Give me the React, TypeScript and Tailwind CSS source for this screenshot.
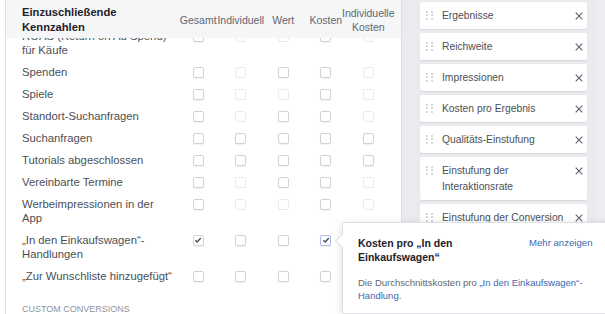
import React from "react";

type Box = "n" | "f" | "c" | "cb";

const rows: { label: string; boxes: Box[] }[] = [
  { label: "ROAS (Return on Ad Spend) für Käufe", boxes: ["n", "f", "f", "n", "f"] },
  { label: "Spenden", boxes: ["n", "f", "n", "n", "f"] },
  { label: "Spiele", boxes: ["n", "f", "f", "n", "f"] },
  { label: "Standort-Suchanfragen", boxes: ["n", "f", "n", "n", "f"] },
  { label: "Suchanfragen", boxes: ["n", "n", "n", "n", "n"] },
  { label: "Tutorials abgeschlossen", boxes: ["n", "n", "n", "n", "n"] },
  { label: "Vereinbarte Termine", boxes: ["n", "f", "n", "n", "f"] },
  { label: "Werbeimpressionen in der App", boxes: ["n", "f", "f", "n", "f"] },
  { label: "„In den Einkaufswagen“-Handlungen", boxes: ["c", "n", "n", "cb", "n"] },
  { label: "„Zur Wunschliste hinzugefügt“", boxes: ["n", "n", "n", "n", "n"] },
];

const cards = [
  "Ergebnisse",
  "Reichweite",
  "Impressionen",
  "Kosten pro Ergebnis",
  "Qualitäts-Einstufung",
  "Einstufung der Interaktionsrate",
  "Einstufung der Conversion",
  "Einstufung der Relevanz",
];

function Checkbox({ state }: { state: Box }) {
  const faded = state === "f";
  const checked = state === "c" || state === "cb";
  return (
    <span
      className={`flex h-[11px] w-[11px] items-center justify-center rounded-[2px] border bg-white ${
        faded
          ? "border-[#e9ebee]"
          : state === "cb"
          ? "border-[#a9bde6] shadow-[0_1px_1px_rgba(0,0,0,0.06)]"
          : "border-[#cfd3d8] shadow-[0_1px_1px_rgba(0,0,0,0.06)]"
      }`}
    >
      {checked && (
        <svg width="8" height="8" viewBox="0 0 8 8" fill="none">
          <path d="M1.3 4.2 L3.2 6 L6.8 2" stroke="#4b4f56" strokeWidth="1.4" />
        </svg>
      )}
    </span>
  );
}

function Handle() {
  return (
    <span className="mt-[3px] grid shrink-0 grid-cols-[2px_2px] gap-x-[3px] gap-y-[1.5px]">
      {[0, 1, 2, 3, 4, 5].map((i) => (
        <span key={i} className="h-[2px] w-[2px] bg-[#d3d6db]" />
      ))}
    </span>
  );
}

export default function App() {
  return (
    <div className="relative flex h-[314px] w-[605px] overflow-hidden bg-white font-['Liberation_Sans',Arial,sans-serif]">
      {/* linke Tabelle */}
      <div className="ml-[5px] flex w-[397px] shrink-0 flex-col border-l border-r border-[#dddfe2]">
        <div className="relative z-10 grid h-[38px] shrink-0 grid-cols-[155px_repeat(5,42.5px)] items-center bg-[#f5f6f7] pl-[16px] pt-[1px]">
          <div className="text-[11.2px] font-bold leading-[15px] text-[#1d2129]">
            Einzuschließende Kennzahlen
          </div>
          {["Gesamt", "Individuell", "Wert", "Kosten"].map((h) => (
            <div key={h} className="flex justify-center whitespace-nowrap text-[10.5px] leading-[14px] text-[#606770]">
              {h}
            </div>
          ))}
          <div className="flex flex-col items-center whitespace-nowrap text-[10.5px] leading-[14px] text-[#606770]">
            <span>Individuelle</span>
            <span>Kosten</span>
          </div>
        </div>

        <div className="flex-1 overflow-hidden">
          <div className="-mt-[13px]">
            {rows.map((r) => (
              <div key={r.label} className="grid grid-cols-[155px_repeat(5,42.5px)] items-start py-[4px] pl-[16px]">
                <div className="w-[153.5px] text-[11.3px] leading-[14px] text-[#4b4f56]">{r.label}</div>
                {r.boxes.map((b, i) => (
                  <div key={i} className="flex h-[14px] items-center justify-center">
                    <Checkbox state={b} />
                  </div>
                ))}
              </div>
            ))}
            <div className="pl-[16px] pt-[16px] text-[9px] uppercase leading-[12px] text-[#90949c]">
              Custom Conversions
            </div>
          </div>
        </div>
      </div>

      {/* rechte Spalte */}
      <div className="flex flex-1 bg-[#e9ebee]">
        <div className="ml-[18px] flex w-[167px] flex-col gap-[4px] pt-[2px]">
          {cards.map((c) => (
            <div
              key={c}
              className="flex items-start rounded-[2px] bg-white py-[5.5px] pl-[6px] pr-[4px] shadow-[0_1px_1px_rgba(0,0,0,0.08)]"
            >
              <Handle />
              <span className="ml-[9px] flex-1 text-[10.3px] leading-[16px] text-[#4b4f56]">{c}</span>
              <svg className="mt-[4px] shrink-0" width="8" height="8" viewBox="0 0 8 8">
                <path d="M0.7 0.7 L7.3 7.3 M7.3 0.7 L0.7 7.3" stroke="#606770" strokeWidth="1.2" />
              </svg>
            </div>
          ))}
        </div>
        <div className="ml-auto w-[9px] bg-[#eceef1]" />
      </div>

      {/* Tooltip */}
      <div className="absolute left-[342px] top-[222px] z-20 h-[92px] w-[280px] rounded-[3px] border border-[#dddfe2] bg-white pl-[15px] pt-[13px] shadow-[0_2px_8px_rgba(0,0,0,0.15)]">
        <span className="absolute -left-[6px] top-[13px] h-[10px] w-[10px] rotate-45 border-b border-l border-[#dddfe2] bg-white" />
        <div className="flex items-start">
          <div className="w-[150px] text-[10.5px] font-bold leading-[14px] text-[#1d2129]">
            Kosten pro „In den Einkaufswagen“
          </div>
          <a className="ml-[21px] whitespace-nowrap text-[9.6px] leading-[14px] text-[#4267b2]">Mehr anzeigen</a>
        </div>
        <p className="mt-[12px] w-[245px] text-[9.5px] leading-[13px] text-[#606770]">
          Die Durchschnittskosten pro{" "}
          <a className="text-[#4267b2]">„In den Einkaufswagen“-Handlung.</a>
        </p>
      </div>
    </div>
  );
}
